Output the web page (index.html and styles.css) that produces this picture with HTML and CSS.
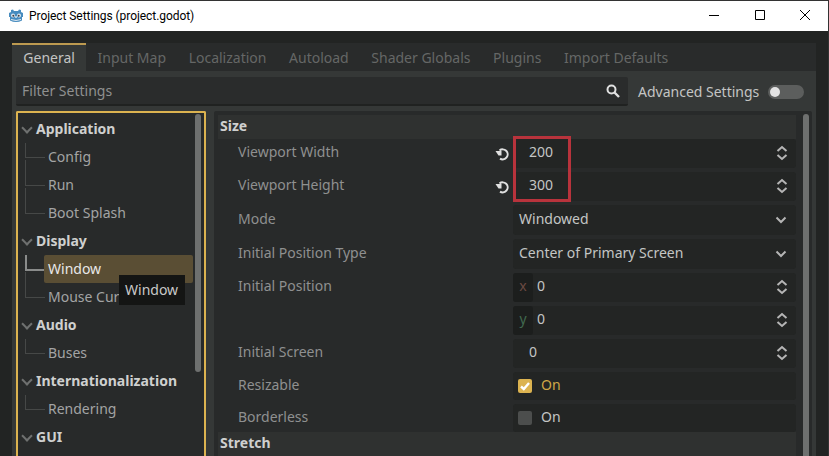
FILE: index.html
```html
<!DOCTYPE html>
<html>
    <head lang="en">
        <meta charset="UTF-8">
        <title>Project Settings</title>
        <link rel="stylesheet" href="styles.css">
    </head>
    <body>
        <div id="window">
            <div id="titlebar">
                <svg class="logo" width="16" height="16" viewBox="0 0 16 16">
                    <path fill="#478cbf" d="M1 9 L1 5 L3 4 L3 2 L5 1.500 L6 3 L10 3 L11 1.500 L13 2 L13 4 L15 5 L15 9 L14 9 L14 12.500 Q8 15.500 2 12.500 L2 9 Z"/>
                    <circle cx="5" cy="7.500" r="2" fill="#dfe9f2"/>
                    <circle cx="11" cy="7.500" r="2" fill="#dfe9f2"/>
                    <circle cx="5.300" cy="7.700" r="1" fill="#414042"/>
                    <circle cx="10.700" cy="7.700" r="1" fill="#414042"/>
                    <rect x="7.300" y="8" width="1.400" height="2" fill="#dfe9f2"/>
                    <path stroke="#dfe9f2" stroke-width="1" fill="none" d="M3 11.500 Q8 13.500 13 11.500"/>
                </svg>
                <span class="title">Project Settings (project.godot)</span>
                <div class="winbtns">
                    <svg width="12" height="12" viewBox="0 0 12 12"><path d="M1 6.500H11" stroke="#000" fill="none"/></svg>
                    <svg width="12" height="12" viewBox="0 0 12 12"><path d="M1.500 1.500H10.500V10.500H1.500Z" stroke="#000" fill="none"/></svg>
                    <svg width="12" height="12" viewBox="0 0 12 12"><path d="M1 1L11 11M11 1L1 11" stroke="#000" fill="none"/></svg>
                </div>
            </div>
            <div id="main">
                <ul id="tabs">
                    <li class="selected">General</li>
                    <li>Input Map</li>
                    <li>Localization</li>
                    <li>Autoload</li>
                    <li>Shader Globals</li>
                    <li>Plugins</li>
                    <li>Import Defaults</li>
                </ul>
                <div id="panel">
                    <div id="filter">
                        <div class="search">
                            <span>Filter Settings</span>
                            <svg width="16" height="16" viewBox="0 0 16 16"><circle cx="6.500" cy="6.500" r="4" stroke="#e0e0e0" stroke-width="2" fill="none"/><path d="M9.500 9.500L14 14" stroke="#e0e0e0" stroke-width="2.400"/></svg>
                        </div>
                        <span class="advanced">Advanced Settings</span>
                        <div class="toggle"><i></i></div>
                    </div>
                    <div id="split">
                        <div id="tree">
                            <ul>
                                <li class="cat">Application</li>
                                <li class="child first">Config</li>
                                <li class="child">Run</li>
                                <li class="child">Boot Splash</li>
                                <li class="cat">Display</li>
                                <li class="child first selected"><span>Window</span></li>
                                <li class="child">Mouse Cur</li>
                                <li class="cat">Audio</li>
                                <li class="child first">Buses</li>
                                <li class="cat">Internationalization</li>
                                <li class="child first">Rendering</li>
                                <li class="cat">GUI</li>
                            </ul>
                            <div class="scroll"></div>
                        </div>
                        <div id="inspector">
                            <div class="rows">
                                <div class="section">Size</div>
                                <div class="row">
                                    <label>Viewport Width</label>
                                    <svg class="reset" width="16" height="16"><use href="#reset"/></svg>
                                    <div class="field num"><span>200</span><svg class="spin" width="12" height="16"><use href="#spin"/></svg></div>
                                </div>
                                <div class="row">
                                    <label>Viewport Height</label>
                                    <svg class="reset" width="16" height="16"><use href="#reset"/></svg>
                                    <div class="field num"><span>300</span><svg class="spin" width="12" height="16"><use href="#spin"/></svg></div>
                                </div>
                                <div class="row tall">
                                    <label>Mode</label>
                                    <div class="field"><span>Windowed</span><svg class="drop" width="12" height="8"><use href="#drop"/></svg></div>
                                </div>
                                <div class="row tall">
                                    <label>Initial Position Type</label>
                                    <div class="field"><span>Center of Primary Screen</span><svg class="drop" width="12" height="8"><use href="#drop"/></svg></div>
                                </div>
                                <div class="row">
                                    <label>Initial Position</label>
                                    <div class="field axis"><b class="x">x</b><span>0</span><svg class="spin" width="12" height="16"><use href="#spin"/></svg></div>
                                </div>
                                <div class="row">
                                    <label></label>
                                    <div class="field axis"><b class="y">y</b><span>0</span><svg class="spin" width="12" height="16"><use href="#spin"/></svg></div>
                                </div>
                                <div class="row">
                                    <label>Initial Screen</label>
                                    <div class="field num"><span>0</span><svg class="spin" width="12" height="16"><use href="#spin"/></svg></div>
                                </div>
                                <div class="row check">
                                    <label>Resizable</label>
                                    <div class="field on">
                                        <i class="box"><svg width="14" height="14" viewBox="0 0 14 14"><path d="M3 7.500L5.800 10L11 4" stroke="#fff" stroke-width="2.400" fill="none"/></svg></i>
                                        <span>On</span>
                                    </div>
                                </div>
                                <div class="row check last">
                                    <label>Borderless</label>
                                    <div class="field"><i class="box"></i><span>On</span></div>
                                </div>
                                <div class="section">Stretch</div>
                            </div>
                            <div class="scroll"></div>
                            <div class="redbox"></div>
                        </div>
                    </div>
                </div>
            </div>
            <div class="tooltip">Window</div>
        </div>
        <svg width="0" height="0" class="defs">
            <symbol id="spin" viewBox="0 0 12 16"><path d="M1.500 6L6 2L10.500 6M1.500 10L6 14L10.500 10" stroke="#b5b5b5" stroke-width="2" fill="none"/></symbol>
            <symbol id="drop" viewBox="0 0 12 8"><path d="M1.500 1.500L6 6L10.500 1.500" stroke="#b5b5b5" stroke-width="2" fill="none"/></symbol>
            <symbol id="reset" viewBox="0 0 16 16"><path d="M5.500 4.500A5 5 0 1 1 6 12.600" stroke="#e0e0e0" stroke-width="2" fill="none"/><path d="M1.500 5H7.500V9.500H4.500Z" fill="#e0e0e0"/></symbol>
        </svg>
    </body>
</html>
```

FILE: styles.css
```css
*{
    margin:0;
    padding:0;
    box-sizing:border-box;
}
ul{
    list-style:none;
}
html,body{
    width:829px;
    height:456px;
    overflow:hidden;
}
body{
    font-family:"Noto Sans",sans-serif;
    font-size:14px;
    color:#c4c5c4;
    background-color:#222423;
}
.defs{
    display:block;
}
#window{
    position:relative;
    width:829px;
    height:456px;
    overflow:hidden;
    border-top:1px solid #333;
    border-right:1px solid #333;
    display:flex;
    flex-direction:column;
}
#titlebar{
    height:30px;
    flex:none;
    background-color:#fff;
    color:#000;
    font-family:Roboto,sans-serif;
    font-size:12px;
    letter-spacing:-.06px;
    display:flex;
    align-items:center;
    padding-left:8px;
}
#titlebar .title{
    margin-left:5px;
}
.winbtns{
    margin-left:auto;
    margin-bottom:2px;
    display:flex;
    gap:33.5px;
    padding-right:17px;
}
#main{
    flex:1;
    min-height:0;
    padding:12px 12px 0 12px;
    display:flex;
    flex-direction:column;
}
#tabs{
    height:28px;
    flex:none;
    display:flex;
    background-color:#292b2b;
    color:#656766;
    line-height:26px;
}
#tabs li{
    padding:0 11.3px;
    border-top:2px solid transparent;
}
#tabs .selected{
    background-color:#353837;
    color:#c4c5c4;
    border-top-color:#bd9a50;
}
#panel{
    flex:1;
    min-height:0;
    background-color:#353837;
    padding:6px 4px 0 4px;
    display:flex;
    flex-direction:column;
    gap:5px;
}
#filter{
    height:29px;
    flex:none;
    display:flex;
    align-items:center;
}
.search{
    width:612px;
    height:29px;
    background-color:#2a2c2c;
    border-bottom:2px solid #202221;
    border-radius:2px;
    color:#8f9090;
    display:flex;
    align-items:center;
    justify-content:space-between;
    padding:0 7px 0 6px;
}
.advanced{
    margin-left:10px;
}
.toggle{
    width:36px;
    height:14px;
    margin-left:9px;
    border-radius:7px;
    background-color:#5c5e5d;
    padding:2px;
}
.toggle i{
    display:block;
    width:10px;
    height:10px;
    border-radius:50%;
    background-color:#e2e2e2;
}
#split{
    flex:1;
    min-height:0;
    display:flex;
    gap:8px;
}
#tree{
    position:relative;
    width:190px;
    background-color:#282a2a;
    border:2px solid #dcb350;
    border-bottom:none;
    padding-top:2px;
    border-radius:2px 2px 0 0;
}
#tree .scroll{
    top:1px;
    right:3px;
    height:258px;
}
.scroll{
    position:absolute;
    width:6px;
    border-radius:3px;
    background-color:#6e706f;
}
#tree li{
    height:28px;
    line-height:28px;
    position:relative;
}
#tree .cat{
    font-weight:bold;
    padding-left:18px;
    color:#cfd0cf;
}
#tree .cat::before{
    content:"";
    position:absolute;
    left:5px;
    top:9px;
    width:6px;
    height:6px;
    border:solid #6f7170;
    border-width:0 2px 2px 0;
    transform:rotate(45deg);
}
#tree .child{
    padding-left:30px;
    color:#a3a4a4;
}
#tree .child::before{
    content:"";
    position:absolute;
    left:7px;
    top:-11px;
    width:19px;
    height:25px;
    border:solid #464847;
    border-width:0 0 1px 1px;
}
#tree .child.first::before{
    top:0;
    height:14px;
}
#tree .selected{
    color:#e8e8e8;
}
#tree .selected::before{
    border-color:#8a8c8b;
    border-width:0 0 2px 2px;
}
#tree .selected span{
    position:absolute;
    left:26px;
    top:0;
    width:149px;
    height:28px;
    padding-left:4px;
    background-color:#5a4e34;
    border-radius:2px;
}
#inspector{
    position:relative;
    flex:1;
    background-color:#282a2a;
    padding:4px 16px 0 4px;
    border-radius:2px 2px 0 0;
}
#inspector .scroll{
    top:3px;
    right:3px;
    height:360px;
}
.section{
    height:24px;
    line-height:22px;
    padding-left:2px;
    font-weight:bold;
    background-color:#2f3130;
    color:#cfd0cf;
}
.row{
    height:33px;
    display:flex;
    align-items:flex-start;
    position:relative;
}
.row.tall{
    height:34px;
}
.row.check{
    height:32px;
}
.row.last{
    height:28px;
}
.row label{
    color:#8f9090;
    padding-left:20px;
    line-height:26px;
}
.tall label{
    line-height:28px;
}
.reset{
    position:absolute;
    left:276px;
    top:7px;
}
.field{
    position:absolute;
    left:295px;
    right:0;
    top:0;
    height:29px;
    background-color:#232524;
    border-radius:3px;
    display:flex;
    align-items:center;
    padding-left:6px;
}
.field span{
    margin-bottom:3px;
}
.num span,.axis span{
    margin-bottom:5px;
}
.tall .field{
    height:30px;
}
.check .field{
    height:28px;
    padding-left:5px;
}
.num{
    padding-left:16px;
}
.spin{
    position:absolute;
    right:8px;
    top:6px;
}
.drop{
    position:absolute;
    right:9px;
    top:11px;
}
.axis{
    padding-left:0;
}
.axis b{
    width:20px;
    height:29px;
    line-height:26px;
    text-align:center;
    font-weight:normal;
    background-color:#1c1e1d;
    border-radius:3px;
    margin-right:4px;
}
.axis .x{
    color:#6b4a42;
}
.axis .y{
    color:#41694f;
}
.box{
    width:14px;
    height:14px;
    border-radius:2px;
    background-color:#4c4e4d;
    margin-right:9px;
    display:block;
}
.box svg{
    display:block;
}
.on{
    color:#d0a847;
}
.on .box{
    background-color:#dcb350;
}
.redbox{
    position:absolute;
    left:299px;
    top:25px;
    width:58px;
    height:66px;
    border:3px solid #b8333c;
}
.tooltip{
    position:absolute;
    left:119px;
    top:274px;
    width:66px;
    height:30px;
    line-height:29px;
    padding-left:6px;
    background-color:#141514;
    color:#c9c9c9;
}
```
